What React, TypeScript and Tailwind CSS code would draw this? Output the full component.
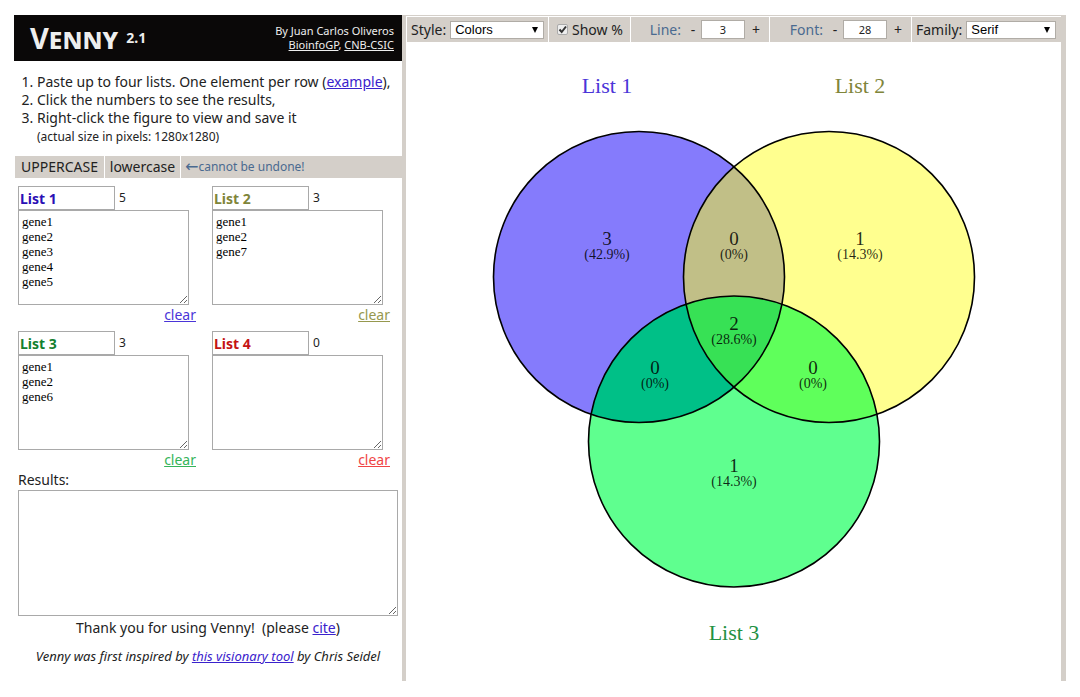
import { useState } from "react";
import type { ReactNode } from "react";

type ListInfo = {
  id: string;
  name: string;
  items: string[];
  nameColor: string;
  clearColor: string;
};

const initialLists: ListInfo[] = [
  { id: "a", name: "List 1", items: ["gene1", "gene2", "gene3", "gene4", "gene5"], nameColor: "text-[#2a0fb5]", clearColor: "text-[#4a35d8]" },
  { id: "b", name: "List 2", items: ["gene1", "gene2", "gene7"], nameColor: "text-[#80853a]", clearColor: "text-[#96984e]" },
  { id: "c", name: "List 3", items: ["gene1", "gene2", "gene6"], nameColor: "text-[#128030]", clearColor: "text-[#35b45a]" },
  { id: "d", name: "List 4", items: [], nameColor: "text-[#c41414]", clearColor: "text-[#f04545]" },
];

function ListBox({ list }: { list: ListInfo }) {
  const [name, setName] = useState(list.name);
  const [text, setText] = useState(list.items.join("\n"));
  const count = text.split("\n").filter((row) => row.trim() !== "").length;

  return (
    <section className="flex flex-col">
      <div className="flex items-center gap-1">
        <input
          aria-label={`Name of ${list.name}`}
          className={`h-6 w-[97px] border border-[#a9a9a9] bg-white px-px text-sm leading-5 font-bold outline-none ${list.nameColor}`}
          value={name}
          onChange={(e) => setName(e.target.value)}
        />
        <span className="text-xs">{count}</span>
      </div>
      <textarea
        aria-label={`Elements of ${list.name}`}
        className="h-[95px] w-[171px] resize overflow-auto border border-[#a9a9a9] bg-white px-[3px] py-[3px] font-['Liberation_Serif',serif] text-[13px] leading-[15px] text-black outline-none"
        value={text}
        onChange={(e) => setText(e.target.value)}
      />
      <button
        type="button"
        className={`self-end text-sm leading-5 underline ${list.clearColor}`}
        onClick={() => setText("")}
      >
        clear
      </button>
    </section>
  );
}

function Picker({ id, label, options, width }: { id: string; label: string; options: string[]; width: string }) {
  return (
    <div className="flex h-full items-center gap-1 bg-[#d4cfc9] pl-1">
      <label htmlFor={id} className="text-sm">{label}</label>
      <div className={`relative ${width}`}>
        <select
          id={id}
          className="block h-[18px] w-full appearance-none border border-[#b0aca6] bg-white pl-1 font-['Liberation_Sans',sans-serif] text-[13px] leading-4 text-black"
        >
          {options.map((option) => (
            <option key={option}>{option}</option>
          ))}
        </select>
        <svg viewBox="0 0 6 6" className="pointer-events-none absolute top-1.5 right-1.5 size-1.5" aria-hidden="true">
          <path d="M0 0H6L3 6Z" fill="#000" />
        </svg>
      </div>
    </div>
  );
}

function Stepper({ id, label, initial }: { id: string; label: string; initial: number }) {
  const [value, setValue] = useState(initial);
  return (
    <div className="flex h-full items-center justify-end bg-[#d4cfc9] pr-0.5">
      <label htmlFor={id} className="text-sm text-[#4a6a90]">{label}</label>
      <button type="button" aria-label={`Decrease ${label}`} className="w-5 pl-1 text-center text-sm" onClick={() => setValue(value - 1)}>-</button>
      <input
        id={id}
        className="h-[19px] w-11 border border-[#b0aca6] bg-white text-center text-[11px]"
        value={value}
        onChange={(e) => setValue(Number(e.target.value) || 0)}
      />
      <button type="button" aria-label={`Increase ${label}`} className="w-[22px] text-center text-sm" onClick={() => setValue(value + 1)}>+</button>
    </div>
  );
}

const regions = [
  { x: 201, y: 203, count: "3", percent: "(42.9%)" },
  { x: 328, y: 203, count: "0", percent: "(0%)" },
  { x: 454, y: 203, count: "1", percent: "(14.3%)" },
  { x: 328, y: 288, count: "2", percent: "(28.6%)" },
  { x: 249, y: 332, count: "0", percent: "(0%)" },
  { x: 407, y: 332, count: "0", percent: "(0%)" },
  { x: 328, y: 430, count: "1", percent: "(14.3%)" },
];

function Venn() {
  const a = { cx: 233, cy: 235, r: 145.5 };
  const b = { cx: 423, cy: 235, r: 145.5 };
  const c = { cx: 328, cy: 399.5, r: 145.5 };
  return (
    <svg viewBox="0 0 655 639" className="block h-auto w-full font-['Liberation_Serif',serif]" role="img" aria-label="Venn diagram">
      <defs>
        <clipPath id="in-a"><circle {...a} /></clipPath>
        <clipPath id="in-b"><circle {...b} /></clipPath>
      </defs>
      <circle {...a} fill="#857bfc" />
      <circle {...b} fill="#ffff8f" />
      <circle {...c} fill="#5fff8f" />
      <circle {...b} fill="#c1bf87" clipPath="url(#in-a)" />
      <circle {...c} fill="#00c087" clipPath="url(#in-a)" />
      <g clipPath="url(#in-b)">
        <circle {...c} fill="#5fff5b" />
        <circle {...c} fill="#37e155" clipPath="url(#in-a)" />
      </g>
      <g fill="none" stroke="#000" strokeWidth="1.6">
        <circle {...a} />
        <circle {...b} />
        <circle {...c} />
      </g>
      <g textAnchor="middle" fontSize="22">
        <text x="201" y="51" fill="#4a35d8">List 1</text>
        <text x="454" y="51" fill="#80853a">List 2</text>
        <text x="328" y="598" fill="#229143">List 3</text>
      </g>
      <g textAnchor="middle" fill="#000" fillOpacity="0.85">
        {regions.map((r) => (
          <g key={`${r.x}-${r.y}`} className="cursor-pointer">
            <text x={r.x} y={r.y} fontSize="19">{r.count}</text>
            <text x={r.x} y={r.y + 14} fontSize="14">{r.percent}</text>
          </g>
        ))}
      </g>
    </svg>
  );
}

function Link({ children, className = "text-[#3a22cc]" }: { children: ReactNode; className?: string }) {
  return <a href="#" className={`underline ${className}`}>{children}</a>;
}

export default function App() {
  const [results, setResults] = useState("");
  return (
    <div className="min-h-screen bg-white px-3.5 py-[15px] font-['Noto_Sans','Open_Sans',sans-serif] text-sm text-[#222]">
      <div className="flex border-r-[5px] border-[#d4cfc9]">
        <aside className="flex w-[392px] shrink-0 flex-col border-r-4 border-[#d4cfc9]">
          <header className="flex h-[46px] items-center justify-between bg-[#0a0808] pr-2 pl-4 text-[#eee]">
            <h1 className="flex items-center gap-2 font-bold">
              <span className="text-[29px] leading-10 [font-variant-caps:small-caps]">Venny</span>
              <span className="text-sm">2.1</span>
            </h1>
            <p className="text-right text-[11px] leading-[14px]">
              By Juan Carlos Oliveros
              <br />
              <Link className="text-[#eee]">BioinfoGP</Link>, <Link className="text-[#eee]">CNB-CSIC</Link>
            </p>
          </header>

          <ol className="list-decimal pt-3 pl-[23px] leading-[18px] whitespace-nowrap">
            <li>Paste up to four lists. One element per row (<Link>example</Link>),</li>
            <li>Click the numbers to see the results,</li>
            <li>
              Right-click the figure to view and save it
              <br />
              <span className="text-xs leading-[18px]">(actual size in pixels: 1280x1280)</span>
            </li>
          </ol>

          <div className="mt-2.5 ml-px flex h-[22px] items-stretch gap-px">
            <button type="button" className="w-[89px] bg-[#d4cfc9] text-sm">UPPERCASE</button>
            <button type="button" className="w-[75px] bg-[#d4cfc9] text-sm">lowercase</button>
            <span className="flex flex-1 items-center bg-[#d4cfc9] pl-1 text-xs text-[#4a6a90]">
              <span className="font-['DejaVu_Sans',sans-serif] text-base leading-4">←</span>cannot be undone!
            </span>
          </div>

          <div className="mt-2 ml-1 grid grid-cols-[178px_178px] gap-x-4 gap-y-1.5">
            {initialLists.map((list) => (
              <ListBox key={list.id} list={list} />
            ))}
          </div>

          <div className="flex flex-col pr-1 pl-1">
            <label htmlFor="results" className="leading-5">Results:</label>
            <textarea
              id="results"
              className="h-[126px] w-full resize border border-[#a9a9a9] bg-white p-[3px] text-xs outline-none"
              value={results}
              onChange={(e) => setResults(e.target.value)}
            />
          </div>
          <p className="mt-0.5 text-center leading-5">
            Thank you for using Venny!&nbsp; (please <Link>cite</Link>)
          </p>
          <p className="mt-2 text-center text-[13px] leading-5 italic">
            Venny was first inspired by <Link>this visionary tool</Link> by Chris Seidel
          </p>
        </aside>

        <main className="min-w-0 flex-1">
          <div className="grid h-[27px] grid-cols-[141fr_81fr_138fr_141fr_149fr] gap-px border-t border-[#d4cfc9] pt-px pl-px">
            <Picker id="style" label="Style:" options={["Colors", "B/W"]} width="w-[94px]" />
            <div className="flex h-full items-center gap-1 bg-[#d4cfc9] pl-2">
              <span className="relative flex size-[11px]">
                <input
                  id="show-percent"
                  type="checkbox"
                  defaultChecked
                  className="peer size-[11px] appearance-none rounded-xs border border-[#aaa] bg-[#eee]"
                />
                <svg viewBox="0 0 11 11" className="pointer-events-none absolute inset-0 hidden size-[11px] peer-checked:block" aria-hidden="true">
                  <path d="M2.5 5.5L4.7 8L9 2.5" fill="none" stroke="#333" strokeWidth="2" />
                </svg>
              </span>
              <label htmlFor="show-percent" className="text-sm whitespace-nowrap">Show %</label>
            </div>
            <Stepper id="line" label="Line:" initial={3} />
            <Stepper id="font" label="Font:" initial={28} />
            <Picker id="family" label="Family:" options={["Serif", "Sans-serif", "Monospace"]} width="w-[90px]" />
          </div>
          <Venn />
        </main>
      </div>
    </div>
  );
}
